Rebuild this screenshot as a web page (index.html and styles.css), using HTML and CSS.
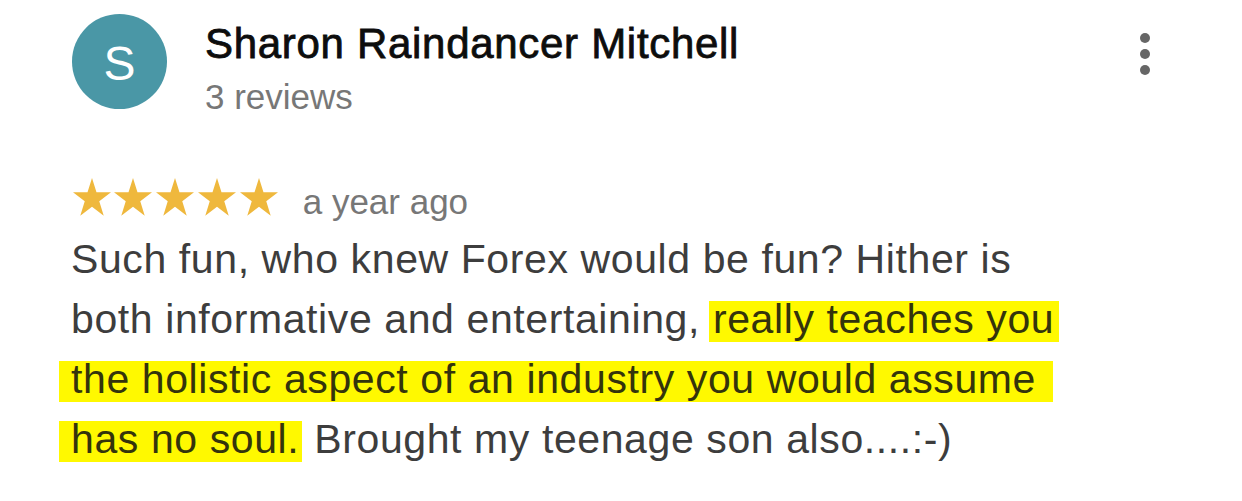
FILE: index.html
```html
<!DOCTYPE html>
<html lang="en">
<head>
<meta charset="utf-8">
<title>Review</title>
<link rel="stylesheet" href="styles.css">
</head>
<body>
<div class="review">
  <div class="header">
    <div class="avatar">S</div>
    <div class="who">
      <div class="name">Sharon Raindancer Mitchell</div>
      <div class="count">3 reviews</div>
    </div>
    <div class="menu" aria-label="More options">
      <span class="dot"></span><span class="dot"></span><span class="dot"></span>
    </div>
  </div>
  <div class="meta">
    <div class="stars">
      <svg class="star" viewBox="0 0 100 96" preserveAspectRatio="none"><polygon points="50,0 61.8,36.3 100,36.3 69.1,58.8 80.9,95.1 50,72.6 19.1,95.1 30.9,58.8 0,36.3 38.2,36.3"/></svg>
      <svg class="star" viewBox="0 0 100 96" preserveAspectRatio="none"><polygon points="50,0 61.8,36.3 100,36.3 69.1,58.8 80.9,95.1 50,72.6 19.1,95.1 30.9,58.8 0,36.3 38.2,36.3"/></svg>
      <svg class="star" viewBox="0 0 100 96" preserveAspectRatio="none"><polygon points="50,0 61.8,36.3 100,36.3 69.1,58.8 80.9,95.1 50,72.6 19.1,95.1 30.9,58.8 0,36.3 38.2,36.3"/></svg>
      <svg class="star" viewBox="0 0 100 96" preserveAspectRatio="none"><polygon points="50,0 61.8,36.3 100,36.3 69.1,58.8 80.9,95.1 50,72.6 19.1,95.1 30.9,58.8 0,36.3 38.2,36.3"/></svg>
      <svg class="star" viewBox="0 0 100 96" preserveAspectRatio="none"><polygon points="50,0 61.8,36.3 100,36.3 69.1,58.8 80.9,95.1 50,72.6 19.1,95.1 30.9,58.8 0,36.3 38.2,36.3"/></svg>
    </div>
    <span class="when">a year ago</span>
  </div>
  <div class="text">
    <div class="line">Such fun, who knew Forex would be fun? Hither is</div>
    <div class="line">both informative and entertaining, <span class="hl hl-a">really teaches you</span></div>
    <div class="line"><span class="hl hl-b">the holistic aspect of an industry you would assume</span></div>
    <div class="line"><span class="hl hl-c">has no soul.</span> Brought my teenage son also....:-)</div>
  </div>
</div>
</body>
</html>
```
FILE: styles.css
```css
html, body {
  margin: 0;
  padding: 0;
  background: #ffffff;
}

body {
  font-family: "Liberation Sans", Arial, Helvetica, sans-serif;
  width: 1242px;
  height: 501px;
  overflow: hidden;
}

.review {
  padding-left: 71px;
}

.header {
  display: flex;
  align-items: flex-start;
}

.avatar {
  width: 95px;
  height: 95px;
  margin-top: 14px;
  margin-left: 1px;
  border-radius: 50%;
  background: #4a97a6;
  color: #ffffff;
  font-size: 48px;
  line-height: 1;
  display: flex;
  align-items: center;
  justify-content: center;
  padding-top: 4px;
  box-sizing: border-box;
}

.who {
  margin-left: 38px;
  margin-top: 20px;
}

.name {
  font-size: 42px;
  line-height: 48px;
  color: #0d0d0d;
  letter-spacing: 0.7px;
  -webkit-text-stroke: 0.8px #0d0d0d;
}

.count {
  margin-top: 7px;
  font-size: 35px;
  line-height: 44px;
  color: #777777;
}

.menu {
  margin-left: auto;
  margin-right: 92px;
  margin-top: 33px;
  display: flex;
  flex-direction: column;
  gap: 6px;
}

.dot {
  width: 10px;
  height: 10px;
  border-radius: 50%;
  background: #666666;
}

.meta {
  margin-top: 59px;
  display: flex;
  align-items: flex-start;
  height: 40px;
}

.stars {
  display: flex;
  gap: 3.8px;
  padding-left: 1.5px;
}

.star {
  width: 38px;
  height: 38px;
  fill: #efb83d;
  display: block;
}

.when {
  margin-left: 25px;
  font-size: 35px;
  line-height: 40px;
  margin-top: 4px;
  color: #777777;
}

.text {
  margin-top: 11px;
  font-size: 41px;
  line-height: 60px;
  color: #3d3d3d;
  letter-spacing: 0.6px;
}

.line {
  white-space: nowrap;
}

.hl {
  background: linear-gradient(to bottom, transparent 5px, #fff900 5px);
  color: #34340c;
}

.hl-a {
  margin-left: -3px;
  padding-left: 4px;
  padding-right: 5px;
}

.hl-b {
  margin-left: -12px;
  padding-left: 12px;
  padding-right: 17px;
}

.hl-c {
  margin-left: -12px;
  padding-left: 12px;
  padding-right: 3px;
}
```
